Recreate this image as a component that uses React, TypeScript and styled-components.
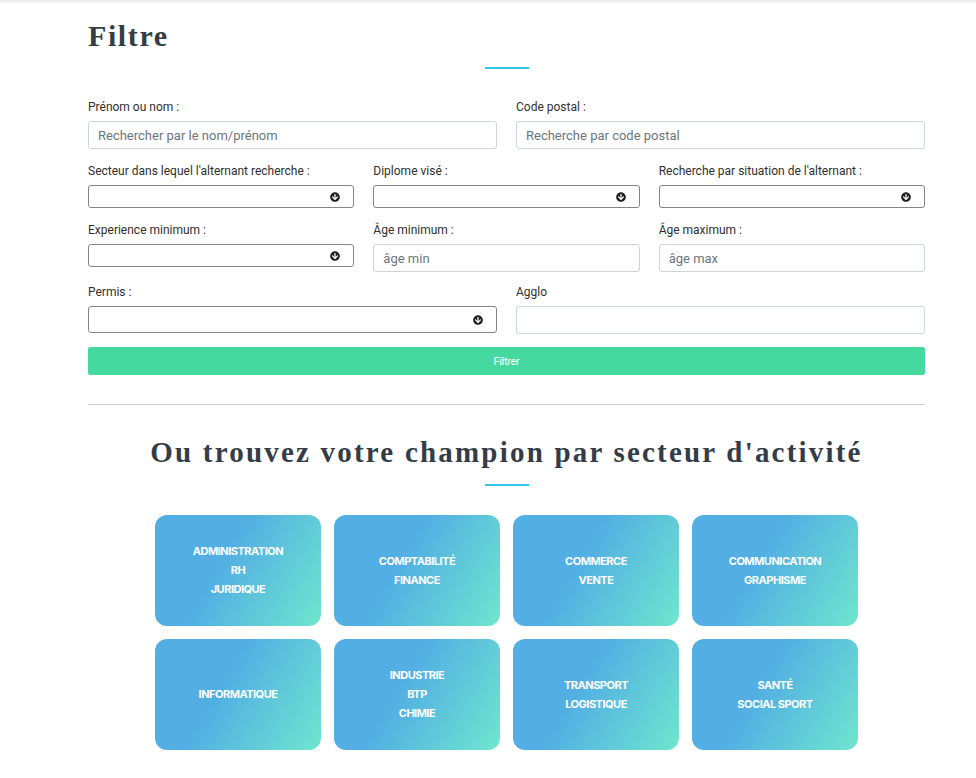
import React from "react";
import styled, { createGlobalStyle } from "styled-components";
import { FaArrowCircleDown } from "react-icons/fa";

const GlobalStyle = createGlobalStyle`
  body {
    margin: 0;
    background: #ffffff;
    font-family: Roboto, "Liberation Sans", sans-serif;
    color: #333333;
  }
`;

const sectors = [
  ["ADMINISTRATION", "RH", "JURIDIQUE"],
  ["COMPTABILITÉ", "FINANCE"],
  ["COMMERCE", "VENTE"],
  ["COMMUNICATION", "GRAPHISME"],
  ["INFORMATIQUE"],
  ["INDUSTRIE", "BTP", "CHIMIE"],
  ["TRANSPORT", "LOGISTIQUE"],
  ["SANTÉ", "SOCIAL SPORT"],
];

const App = () => {
  return (
    <>
      <GlobalStyle />
      <HeaderShadow />
      <Container>
        <Title>Filtre</Title>
        <Accent />

        <Row $cols={2}>
          <Field>
            <Label>Prénom ou nom :</Label>
            <Input placeholder="Rechercher par le nom/prénom" />
          </Field>
          <Field>
            <Label>Code postal :</Label>
            <Input placeholder="Recherche par code postal" />
          </Field>
        </Row>

        <Row $cols={3}>
          <Field>
            <Label>Secteur dans lequel l'alternant recherche :</Label>
            <Select $h={23}>
              <FaArrowCircleDown />
            </Select>
          </Field>
          <Field>
            <Label>Diplome visé :</Label>
            <Select $h={23}>
              <FaArrowCircleDown />
            </Select>
          </Field>
          <Field>
            <Label>Recherche par situation de l'alternant :</Label>
            <Select $h={23}>
              <FaArrowCircleDown />
            </Select>
          </Field>
        </Row>

        <Row $cols={3} $mb={13}>
          <Field>
            <Label>Experience minimum :</Label>
            <Select $h={23}>
              <FaArrowCircleDown />
            </Select>
          </Field>
          <Field>
            <Label>Âge minimum :</Label>
            <Input placeholder="âge min" />
          </Field>
          <Field>
            <Label>Âge maximum :</Label>
            <Input placeholder="âge max" />
          </Field>
        </Row>

        <Row $cols={2}>
          <Field>
            <Label>Permis :</Label>
            <Select $h={27}>
              <FaArrowCircleDown />
            </Select>
          </Field>
          <Field>
            <Label>Agglo</Label>
            <Input />
          </Field>
        </Row>

        <FilterButton>Filtrer</FilterButton>

        <Separator />

        <SectionTitle>Ou trouvez votre champion par secteur d'activité</SectionTitle>
        <Accent />

        <Cards>
          {sectors.map((lines) => (
            <Card key={lines.join("-")}>
              {lines.map((l) => (
                <span key={l}>{l}</span>
              ))}
            </Card>
          ))}
        </Cards>
      </Container>
    </>
  );
};

const HeaderShadow = styled.div`
  height: 4px;
  background: linear-gradient(#e9e9e9, #ffffff);
`;

const Container = styled.div`
  width: 837px;
  margin-left: 88px;
`;

const Title = styled.h1`
  margin: 0;
  padding-top: 16px;
  font-family: "Liberation Serif", serif;
  font-size: 30px;
  line-height: 32px;
  font-weight: 700;
  letter-spacing: 1.6px;
  color: #343d47;
`;

const Accent = styled.div`
  width: 44px;
  height: 2px;
  margin: 15px auto 31px;
  background: #2cc7ea;
`;

const Row = styled.div<{ $cols: number; $mb?: number }>`
  display: grid;
  grid-template-columns: repeat(${({ $cols }) => $cols}, 1fr);
  column-gap: 19px;
  margin-bottom: ${({ $mb = 15 }) => $mb}px;
`;

const Field = styled.div`
  display: flex;
  flex-direction: column;
`;

const Label = styled.label`
  font-size: 12px;
  line-height: 15px;
  margin-bottom: 6px;
  color: #2f2f2f;
`;

const Input = styled.input`
  box-sizing: border-box;
  height: 28px;
  padding: 0 9px;
  border: 1px solid #ced4da;
  border-radius: 3px;
  font-family: Roboto, "Liberation Sans", sans-serif;
  font-size: 13px;
  color: #495057;
  outline: none;

  &::placeholder {
    color: #6c757d;
  }
`;

const Select = styled.div<{ $h: number }>`
  box-sizing: border-box;
  height: ${({ $h }) => $h}px;
  display: flex;
  align-items: center;
  justify-content: flex-end;
  padding-right: 13px;
  border: 1px solid #858585;
  border-radius: 3px;

  svg {
    width: 10px;
    height: 10px;
    color: #222222;
  }
`;

const FilterButton = styled.button`
  display: block;
  width: 100%;
  height: 28px;
  margin-top: -2px;
  border: none;
  border-radius: 2px;
  background: #46d99f;
  color: #ffffff;
  font-family: Roboto, "Liberation Sans", sans-serif;
  font-size: 11px;
  letter-spacing: -0.3px;
  cursor: pointer;
`;

const Separator = styled.hr`
  margin: 29px 0 0;
  border: none;
  border-top: 1px solid #cfcfcf;
`;

const SectionTitle = styled.h2`
  margin: 0;
  padding-top: 30px;
  text-align: center;
  font-family: "Liberation Serif", serif;
  font-size: 29px;
  line-height: 34px;
  font-weight: 700;
  letter-spacing: 2.2px;
  color: #343d47;
`;

const Cards = styled.div`
  display: grid;
  grid-template-columns: repeat(4, 166px);
  gap: 13px;
  justify-content: center;
  margin-top: -2px;
`;

const Card = styled.div`
  height: 111px;
  border-radius: 12px;
  background: linear-gradient(120deg, #52aee3 40%, #6fe6ce 100%);
  display: flex;
  flex-direction: column;
  align-items: center;
  justify-content: center;
  color: #ffffff;
  font-family: Inter, "Open Sans", sans-serif;
  font-size: 11px;
  font-weight: 700;
  letter-spacing: -0.5px;
  line-height: 19px;
  text-align: center;
`;

export default App;
